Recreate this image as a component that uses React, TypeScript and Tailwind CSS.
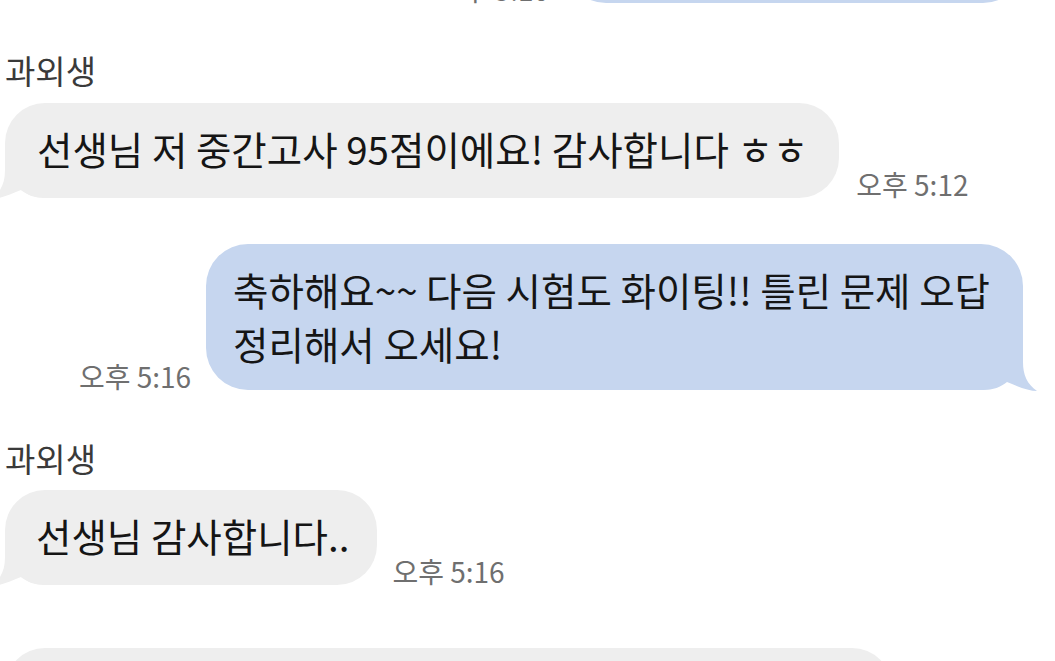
import React from 'react'

function Tail({ side, color }: { side: 'left' | 'right'; color: string }) {
  // speech tail drawn over the bottom corner of a bubble
  if (side === 'right') {
    return (
      <svg className="absolute right-[-16px] bottom-[-2px]" width="64" height="50" viewBox="0 0 64 50">
        <path d="M48,0 L48,20 C48,33 52,42 62,49 C54,49 44,45 32,40 C26,45 18,48 8,48 L0,48 L0,0 Z" fill={color} />
      </svg>
    )
  }
  return (
    <svg className="absolute left-[-16px] bottom-[-2px]" width="64" height="50" viewBox="0 0 64 50">
      <path d="M16,0 L16,20 C16,33 12,42 2,49 C10,49 20,45 32,40 C38,45 46,48 56,48 L64,48 L64,0 Z" fill={color} />
    </svg>
  )
}

function Stamp({ time }: { time: string }) {
  return <span className="text-[28px] leading-[28px] text-[#6f6f6f] whitespace-nowrap">{time}</span>
}

function Name() {
  return <div className="pl-[5px] text-[33px] leading-[40px] text-[#3a3a3a]">과외생</div>
}

export default function App() {
  return (
    <div className="w-[1055px] h-[661px] overflow-hidden bg-white font-['Noto_Sans_CJK_KR','Noto_Sans',sans-serif]">
      <div className="flex flex-col">
        {/* previous sent message, mostly scrolled off */}
        <div className="flex items-end justify-end gap-[15px] pr-[30px] -mt-[92px]">
          <Stamp time="오후 5:10" />
          <div className="w-[461px] h-[95px] rounded-[42px] bg-[#c6d6ef]" />
        </div>

        <div className="mt-[47px]">
          <Name />
        </div>

        <div className="flex items-end gap-[17px] pl-[5px] mt-[13px]">
          <div className="relative rounded-[40px] bg-[#eeeeee] pl-[32px] pr-[31px] pt-[19px] pb-[23px] text-[38.5px] leading-[53px] text-[#151515] whitespace-nowrap">
            <Tail side="left" color="#eeeeee" />
            <span className="relative">선생님 저 중간고사 95점이에요! 감사합니다 ㅎㅎ</span>
          </div>
          <Stamp time="오후 5:12" />
        </div>

        <div className="flex items-end justify-end gap-[15px] pr-[32px] mt-[46px]">
          <Stamp time="오후 5:16" />
          <div className="relative rounded-[42px] bg-[#c6d6ef] pl-[27px] pr-[33px] pt-[18px] pb-[20px] text-[38.5px] leading-[54px] text-[#151515] whitespace-nowrap">
            <Tail side="right" color="#c6d6ef" />
            <span className="relative">
              축하해요~~ 다음 시험도 화이팅!! 틀린 문제 오답
              <br />
              정리해서 오세요!
            </span>
          </div>
        </div>

        <div className="mt-[48px]">
          <Name />
        </div>

        <div className="flex items-end gap-[15px] pl-[5px] mt-[12px]">
          <div className="relative rounded-[40px] bg-[#eeeeee] pl-[31px] pr-[28px] pt-[19px] pb-[23px] text-[38.5px] leading-[53px] text-[#151515] whitespace-nowrap">
            <Tail side="left" color="#eeeeee" />
            <span className="relative">선생님 감사합니다..</span>
          </div>
          <Stamp time="오후 5:16" />
        </div>

        {/* next received message, cut off at the bottom */}
        <div className="pl-[5px] mt-[63px]">
          <div className="w-[887px] h-[95px] rounded-[40px] bg-[#eeeeee]" />
        </div>
      </div>
    </div>
  )
}
